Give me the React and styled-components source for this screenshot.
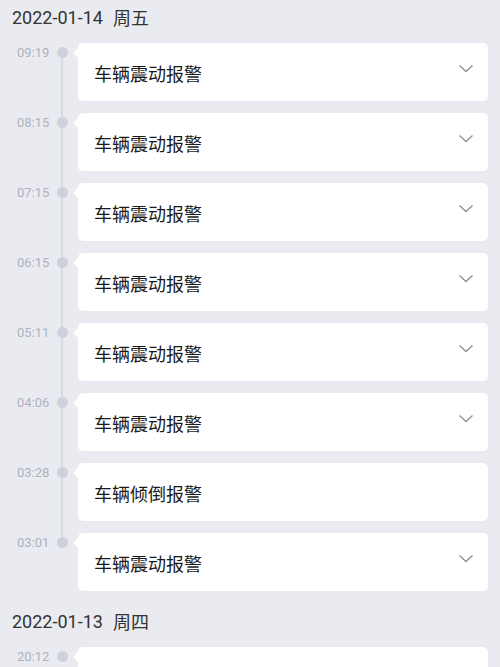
import React from "react";
import styled, { createGlobalStyle, css } from "styled-components";

const GlobalStyle = createGlobalStyle`
  html, body {
    margin: 0;
    padding: 0;
    background: #e9ebf0;
    font-family: "Noto Sans CJK SC", "Noto Sans", sans-serif;
    overflow: hidden;
  }
`;

const Page = styled.div`
  width: 500px;
  height: 667px;
  overflow: hidden;
  background: #e9ebf0;
`;

const DayHeader = styled.div`
  height: 34px;
  padding-left: 12px;
  display: flex;
  align-items: center;
  font-family: "Roboto", "Noto Sans CJK SC", sans-serif;
  font-size: 18px;
  color: #333;
  margin-top: ${(props) => (props.first ? "0" : "13px")};

  span {
    margin-left: 10px;
    font-family: "Noto Sans CJK SC", sans-serif;
    font-size: 18px;
  }
`;

const Timeline = styled.div`
  display: flex;
  flex-direction: column;
  gap: 12px;
  padding-top: 9px;
`;

const Row = styled.div`
  display: grid;
  grid-template-columns: 78px 410px;
`;

const TimeCol = styled.div`
  position: relative;
  height: 58px;

  ${(props) =>
    !props.last &&
    css`
      &::after {
        content: "";
        position: absolute;
        left: 61px;
        top: 10px;
        height: 70px;
        width: 2px;
        background: #d7dae3;
      }
    `}
`;

const Time = styled.div`
  position: absolute;
  left: 17px;
  top: 2px;
  font-family: "Roboto", sans-serif;
  font-size: 13px;
  color: #aeb2bf;
`;

const Dot = styled.div`
  position: absolute;
  left: 57px;
  top: 4px;
  width: 11px;
  height: 11px;
  border-radius: 50%;
  background: #ced1dc;
  z-index: 1;
`;

const Card = styled.div`
  height: 58px;
  background: #fff;
  border-radius: 5px;
  display: flex;
  align-items: center;
  justify-content: space-between;
  padding: 0 14px 0 16px;
  box-sizing: border-box;
  position: relative;

  &::before {
    content: "";
    position: absolute;
    left: -5px;
    top: 5px;
    border-top: 5px solid transparent;
    border-bottom: 5px solid transparent;
    border-right: 5px solid #fff;
  }
`;

const Title = styled.div`
  font-size: 18px;
  color: #1a1a1a;
  margin-top: 2px;
`;

const Chevron = () => (
  <svg width="16" height="10" viewBox="0 0 16 10" style={{ marginTop: "-6px" }}>
    <path d="M1.5 1.5 L8 7.5 L14.5 1.5" fill="none" stroke="#8c8f96" strokeWidth="1.3" />
  </svg>
);

const days = [
  {
    date: "2022-01-14",
    week: "周五",
    items: [
      { time: "09:19", title: "车辆震动报警", more: true },
      { time: "08:15", title: "车辆震动报警", more: true },
      { time: "07:15", title: "车辆震动报警", more: true },
      { time: "06:15", title: "车辆震动报警", more: true },
      { time: "05:11", title: "车辆震动报警", more: true },
      { time: "04:06", title: "车辆震动报警", more: true },
      { time: "03:28", title: "车辆倾倒报警", more: false },
      { time: "03:01", title: "车辆震动报警", more: true },
    ],
  },
  {
    date: "2022-01-13",
    week: "周四",
    items: [{ time: "20:12", title: "车辆震动报警", more: true }],
  },
];

const App = () => {
  return (
    <Page>
      <GlobalStyle />
      {days.map((day, d) => (
        <div key={day.date}>
          <DayHeader first={d === 0}>
            {day.date}
            <span>{day.week}</span>
          </DayHeader>
          <Timeline>
            {day.items.map((item, i) => (
              <Row key={item.time}>
                <TimeCol last={i === day.items.length - 1}>
                  <Time>{item.time}</Time>
                  <Dot />
                </TimeCol>
                <Card>
                  <Title>{item.title}</Title>
                  {item.more && <Chevron />}
                </Card>
              </Row>
            ))}
          </Timeline>
        </div>
      ))}
    </Page>
  );
};

export default App;
